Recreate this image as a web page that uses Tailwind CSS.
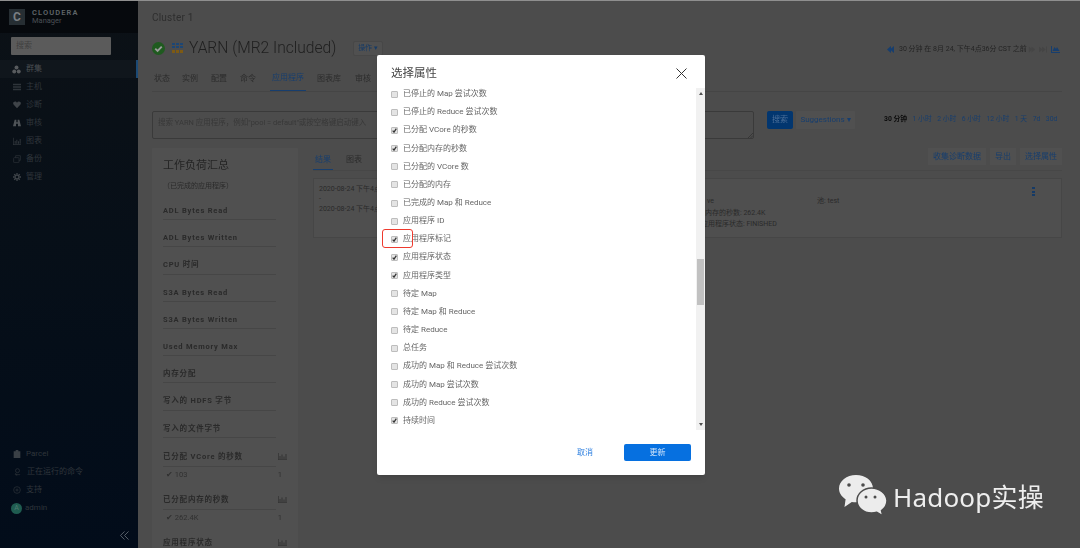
<!DOCTYPE html>
<html lang="en">
<head>
    <meta charset="UTF-8">
    <title>YARN - Cloudera Manager</title>
    <script src="https://cdn.jsdelivr.net/npm/@tailwindcss/browser@4"></script>
</head>
<body class="w-[1080px] h-[548px] overflow-hidden relative bg-[#4c4c4c] font-['Roboto','Noto_Sans_CJK_SC',sans-serif]">
    <div class="h-px bg-[#8f8f8f]"></div>
    <div class="flex h-[547px] blur-[0.4px]">
        <!-- sidebar -->
        <aside class="w-[138px] shrink-0 flex flex-col bg-gradient-to-b from-[#0c1116] to-[#020c1a] text-[8px] text-[#2f353b]">
            <div class="h-[32px] shrink-0 bg-[#06090d] flex items-center pl-[9px] gap-[7px]">
                <div class="w-[16px] h-[16px] bg-[#262e33] flex items-center justify-center text-[#7a7f83] text-[12px] font-bold leading-none">C</div>
                <div class="leading-[8.5px]">
                    <div class="text-[7.5px] font-semibold tracking-[1.1px] text-[#5f6468]">CLOUDERA</div>
                    <div class="text-[7.5px] text-[#4b5055]">Manager</div>
                </div>
            </div>
            <div class="pl-[11px] pr-[27px] pt-[4px] pb-[5px]">
                <div class="h-[18px] bg-[#5b5b5b] rounded-[1px] pl-[5px] flex items-center text-[#3f3f3f] text-[8px]">搜索</div>
            </div>
            <nav class="flex flex-col">
                <div class="h-[18px] flex items-center pl-[12px] gap-[5px] bg-[#10161c] border-r-2 border-[#1c4a75] text-[#4a4e52]">
                    <svg class="w-[9px] h-[9px]" viewBox="0 0 12 12" fill="#585b5e"><circle cx="6" cy="3.4" r="2.6"/><circle cx="3" cy="8.6" r="2.6"/><circle cx="9" cy="8.6" r="2.6"/></svg>群集
                </div>
                <div class="h-[18px] flex items-center pl-[13px] gap-[5px]">
                    <svg class="w-[8px] h-[8px]" viewBox="0 0 12 12" fill="#2f353b"><path d="M0 1h12v2.5H0zM0 4.8h12v2.5H0zM0 8.5h12V11H0z"/></svg>主机
                </div>
                <div class="h-[18px] flex items-center pl-[13px] gap-[5px]">
                    <svg class="w-[8px] h-[8px]" viewBox="0 0 12 12" fill="#3f4449"><path d="M6 11 .8 5.4C-.8 3 1 .8 3.200.8 4.500.8 5.400 1.500 6 2.500 6.600 1.500 7.500.8 8.800.8 11 .8 12.800 3 11.200 5.400z"/></svg>诊断
                </div>
                <div class="h-[18px] flex items-center pl-[13px] gap-[5px]">
                    <svg class="w-[8px] h-[8px]" viewBox="0 0 12 12" fill="#4f5458"><path d="M2.500 1h2.500v4h2V1h2.500L12 11H7.500V7h-3v4H0z"/></svg>审核
                </div>
                <div class="h-[18px] flex items-center pl-[13px] gap-[5px]">
                    <svg class="w-[8px] h-[8px]" viewBox="0 0 12 12" fill="#2f353b"><path d="M0 1h1v10h11v1H0zM2.500 6h1.500v4H2.500zM5 4h1.500v6H5zM7.500 6.500H9V10H7.500zM10 3h1.500v7H10z"/></svg>图表
                </div>
                <div class="h-[18px] flex items-center pl-[13px] gap-[5px]">
                    <svg class="w-[8px] h-[8px]" viewBox="0 0 12 12" fill="none" stroke="#2f353b"><rect x="1" y="4" width="8" height="7.500" rx="1"/><path d="M4 4V1h7v7H9"/></svg>备份
                </div>
                <div class="h-[18px] flex items-center pl-[13px] gap-[5px]">
                    <svg class="w-[8px] h-[8px]" viewBox="0 0 12 12" fill="none" stroke="#3f4449" stroke-width="2"><circle cx="6" cy="6" r="3"/><path d="M6 0v2M6 10v2M0 6h2M10 6h2M1.800 1.800l1.400 1.400M8.800 8.800l1.400 1.400M1.800 10.200l1.400-1.400M8.800 3.200l1.400-1.400"/></svg>管理
                </div>
            </nav>
            <div class="mt-auto flex flex-col">
                <div class="h-[18px] flex items-center pl-[13px] gap-[5px]">
                    <svg class="w-[8px] h-[8px]" viewBox="0 0 12 12" fill="#3a4046"><path d="M4 0h4v2h3v10H1V2h3z"/></svg>Parcel
                </div>
                <div class="h-[18px] flex items-center pl-[13px] gap-[5px]">
                    <svg class="w-[9px] h-[8px]" viewBox="0 0 12 12" fill="none" stroke="#2f353b"><circle cx="6" cy="4" r="3"/><path d="M2 10h8M3 7.500l2 4"/></svg>正在运行的命令
                </div>
                <div class="h-[18px] flex items-center pl-[13px] gap-[5px]">
                    <svg class="w-[8px] h-[8px]" viewBox="0 0 12 12" fill="none" stroke="#2f353b"><circle cx="6" cy="6" r="5"/><circle cx="6" cy="6" r="1.500"/></svg>支持
                </div>
                <div class="h-[18px] flex items-center pl-[11px] gap-[3px]">
                    <div class="w-[11px] h-[11px] rounded-full bg-[#1f5c50] text-[#4f7a70] text-[7px] flex items-center justify-center">A</div>admin
                </div>
                <div class="h-[31px] flex items-center justify-end pr-[9px] pt-[5px]">
                    <svg class="w-[9px] h-[9px]" viewBox="0 0 10 10" fill="none" stroke="#5f6870" stroke-width="1"><path d="M5 .5.500 5 5 9.500M9.500.5 5 5l4.500 4.500"/></svg>
                </div>
            </div>
        </aside>

        <!-- main -->
        <main class="flex-1 pl-[14px] pr-[18px] text-[#262626]">
            <div class="h-[32px] flex items-center text-[10px] text-[#2e2e2e] tracking-[0.2px]">Cluster 1</div>
            <div class="h-[31px] flex items-center">
                <svg class="w-[13px] h-[13px] mr-[7px]" viewBox="0 0 14 14"><circle cx="7" cy="7" r="7" fill="#1f5a1f"/><path d="M3.500 7.200l2.500 2.500 4.500-4.700" fill="none" stroke="#9a9a9a" stroke-width="2"/></svg>
                <svg class="w-[11px] h-[11px] mr-[6px]" viewBox="0 0 11 11"><path fill="#1d4674" d="M0 0h3v2H0zM4 0h3v2H4zM8 0h3v2H8zM0 3h3v2H0zM4 3h3v2H4zM8 3h3v2H8z"/><path fill="#7d5a14" d="M0 7h3v3H0zM4 7h3v3H4zM8 7h3v3H8z"/></svg>
                <span class="w-[149px] whitespace-nowrap text-[15.600px] font-light text-[#1f1f1f]">YARN (MR2 Included)</span>
                <div class="ml-[15px] h-[15px] w-[30px] bg-[#505050] border border-[#474747] rounded-[2px] flex items-center justify-center text-[7px] text-[#153a66]">操作 ▾</div>
            </div>
            <div class="h-[27px] mt-px flex items-end border-b border-[#454545] text-[8px] text-[#2c2c2c]">
                <span class="w-[30px] pl-[2px] pb-[6px]">状态</span>
                <span class="w-[29px] pb-[6px]">实例</span>
                <span class="w-[29px] pb-[6px]">配置</span>
                <span class="w-[30px] pb-[6px]">命令</span>
                <span class="w-[36px] mr-[11px] text-center pb-[6px] text-[#173e6e] border-b border-[#173e6e]">应用程序</span>
                <span class="w-[38px] pb-[6px]">图表库</span>
                <span class="pb-[6px]">审核</span>
            </div>
            <div class="flex items-start mt-[19px] h-[37px]">
                <div class="relative w-[602px] shrink-0 h-[28px] border border-[#3a3a3a] rounded-[2px] pl-[5px] pt-[5px] text-[7.500px] text-[#383838]">
                    搜索 YARN 应用程序，例如"pool = default"或按空格键启动键入
                    <svg class="absolute right-0 bottom-0 w-[5px] h-[5px]" viewBox="0 0 5 5" fill="none" stroke="#2e2e2e" stroke-width="0.7"><path d="M0 5 5 0M2.500 5 5 2.500"/></svg>
                </div>
                <div class="ml-[13px] w-[26px] shrink-0 h-[18px] bg-[#02366f] rounded-[2px] flex items-center justify-center text-[8px] text-[#4c6f99]">搜索</div>
                <div class="ml-[3px] w-[59px] shrink-0 h-[18px] bg-[#505050] rounded-[1px] flex items-center justify-center text-[8px] whitespace-nowrap text-[#173e6e]">Suggestions ▾</div>
                <div class="ml-[29px] shrink-0 flex gap-[5.500px] pt-[3px] whitespace-nowrap text-[6.800px] text-[#173e6e]">
                    <span class="font-bold text-[#0c0c0c]">30 分钟</span><span>1 小时</span><span>2 小时</span><span>6 小时</span><span>12 小时</span><span>1 天</span><span>7d</span><span>30d</span>
                </div>
            </div>
            <div class="flex">
                <!-- workload summary -->
                <section class="w-[146px] shrink-0 h-[402px] bg-[#505050] rounded-[1px] pl-[11px] pr-[11px] pt-[10px] overflow-hidden">
                    <h2 class="text-[11px] leading-[16px] text-[#242424]">工作负荷汇总</h2>
                    <p class="text-[7px] mt-[7px] h-[12px] text-[#2a2a2a]">（已完成的应用程序）</p>
                    <div class="flex flex-col text-[7.500px] font-bold tracking-[0.8px] text-[#2a2a2a] w-[113px]">
                        <div class="h-[27.200px] pt-[12px] border-b border-[#464646]">ADL Bytes Read</div>
                        <div class="h-[27.200px] pt-[12px] border-b border-[#464646]">ADL Bytes Written</div>
                        <div class="h-[27.200px] pt-[12px] border-b border-[#464646]">CPU 时间</div>
                        <div class="h-[27.200px] pt-[12px] border-b border-[#464646]">S3A Bytes Read</div>
                        <div class="h-[27.200px] pt-[12px] border-b border-[#464646]">S3A Bytes Written</div>
                        <div class="h-[27.200px] pt-[12px] border-b border-[#464646]">Used Memory Max</div>
                        <div class="h-[27.200px] pt-[12px] border-b border-[#464646]">内存分配</div>
                        <div class="h-[27.200px] pt-[12px] border-b border-[#464646]">写入的 HDFS 字节</div>
                        <div class="h-[27.200px] pt-[12px] border-b border-[#464646]">写入的文件字节</div>
                        <div class="h-[29px] pt-[13px] border-b border-[#464646] relative">已分配 VCore 的秒数
                            <svg class="absolute left-[115px] top-[15px] w-[9px] h-[7px]" viewBox="0 0 9 7" fill="#333"><path d="M0 0h.7v6.300H9V7H0zM1.500 3h1v3h-1zM3.500 1.500h1V6h-1zM5.500 3.500h1V6h-1zM7.500 1h1v5h-1z"/></svg>
                        </div>
                        <div class="h-[17px] pt-[2px] pl-[3px] font-normal tracking-normal flex justify-between w-[119px] text-[#303030]"><span>✔ 103</span><span>1</span></div>
                        <div class="h-[26px] pt-[10px] border-b border-[#464646] relative">已分配内存的秒数
                            <svg class="absolute left-[115px] top-[12px] w-[9px] h-[7px]" viewBox="0 0 9 7" fill="#333"><path d="M0 0h.7v6.300H9V7H0zM1.500 3h1v3h-1zM3.500 1.500h1V6h-1zM5.500 3.500h1V6h-1zM7.500 1h1v5h-1z"/></svg>
                        </div>
                        <div class="h-[17px] pt-[2px] pl-[3px] font-normal tracking-normal flex justify-between w-[119px] text-[#303030]"><span>✔ 262.4K</span><span>1</span></div>
                        <div class="h-[26px] pt-[10px] relative">应用程序状态
                            <svg class="absolute left-[115px] top-[12px] w-[9px] h-[7px]" viewBox="0 0 9 7" fill="#333"><path d="M0 0h.7v6.300H9V7H0zM1.500 3h1v3h-1zM3.500 1.500h1V6h-1zM5.500 3.500h1V6h-1zM7.500 1h1v5h-1z"/></svg>
                        </div>
                    </div>
                </section>
                <!-- results -->
                <section class="flex-1 ml-[15px]">
                    <div class="h-[23px] flex items-start border-b border-[#474747]">
                        <span class="w-[20px] h-[22px] pt-[6px] text-[8px] text-center text-[#173e6e] border-b border-[#173e6e]">结果</span>
                        <span class="ml-[13px] pt-[6px] text-[8px] text-[#2c2c2c]">图表</span>
                        <div class="ml-auto flex gap-[4px] text-[8px] text-[#173e6e]">
                            <span class="h-[17px] px-[5px] bg-[#505050] flex items-center">收集诊断数据</span>
                            <span class="h-[17px] px-[5px] bg-[#505050] flex items-center">导出</span>
                            <span class="h-[17px] px-[5px] bg-[#505050] flex items-center">选择属性</span>
                        </div>
                    </div>
                    <div class="relative h-[60px] mt-[7px] border border-[#464646] bg-[#4f4f4f] pl-[5px] pt-[5px] text-[7px] leading-[10px] text-[#2a2a2a]">
                        <div>2020-08-24 下午4点</div>
                        <div>-</div>
                        <div>2020-08-24 下午4点</div>
                        <div class="absolute left-[393px] top-[16px] leading-[12px]">ve</div>
                        <div class="absolute left-[503px] top-[16px] leading-[12px]">池: test</div>
                        <div class="absolute left-[370px] top-[28px] leading-[12px]">已分配内存的秒数: 262.4K</div>
                        <div class="absolute left-[387px] top-[39px] leading-[12px]">应用程序状态: FINISHED</div>
                        <div class="absolute left-[718px] top-[8px] w-[2px] h-[9px] flex flex-col justify-between">
                            <div class="w-[3px] h-[2px] bg-[#153a66]"></div><div class="w-[3px] h-[2px] bg-[#153a66]"></div><div class="w-[3px] h-[2px] bg-[#153a66]"></div>
                        </div>
                    </div>
                </section>
            </div>
        </main>
    </div>

    <!-- history bar, sits above the tabs on the right -->
    <div class="absolute left-[887px] top-[44px] flex items-center gap-[4px] whitespace-nowrap text-[7px] text-[#242424] blur-[0.4px]">
        <svg class="w-[8px] h-[7px]" viewBox="0 0 8 7" fill="#173e6e"><path d="M4 0v7L0 3.500zM7 0v7L3 3.500z"/></svg>
        <span class="w-[125px]">30 分钟 在 8月 24, 下午4点36分 CST 之前</span>
        <svg class="w-[7px] h-[7px]" viewBox="0 0 8 7" fill="#454545"><path d="M1 0v7l4-3.500zM4 0v7l4-3.500z"/></svg>
        <svg class="w-[8px] h-[7px]" viewBox="0 0 9 7" fill="#454545"><path d="M0 0v7l4-3.500zM3.500 0v7l4-3.500zM8 0h1v7H8z"/></svg>
        <svg class="w-[9px] h-[7px]" viewBox="0 0 9 7" fill="#173e6e"><path d="M0 0h1v6h8v1H0zM1.500 5l2-4 1.500 2 1-2 2.500 4z"/></svg>
    </div>

    <!-- modal -->
    <div class="absolute left-[377px] top-[55px] w-[328px] h-[420px] bg-white rounded-[2px] flex flex-col text-[#666] shadow-md blur-[0.4px]">
        <div class="h-[33px] shrink-0 flex items-center justify-between pl-[14px] pr-[18px] pt-[4px]">
            <span class="text-[11.500px] text-[#444]">选择属性</span>
            <svg class="w-[11px] h-[11px]" viewBox="0 0 11 11" fill="none" stroke="#333" stroke-width="1"><path d="M.5.500l10 10M10.500.500l-10 10"/></svg>
        </div>
        <div class="h-[342px] shrink-0 flex">
            <div class="flex-1 pl-[14px] overflow-hidden text-[8px]">
                <div id="attrs" class="-mt-[3px]"></div>
            </div>
            <div class="w-[9px] bg-[#f1f1f1] relative shrink-0">
                <div class="absolute left-[2.500px] top-[4px] w-0 h-0 border-x-[2px] border-x-transparent border-b-[3px] border-b-[#505050]"></div>
                <div class="absolute left-[1px] top-[171px] w-[7px] h-[46px] bg-[#c1c1c1]"></div>
                <div class="absolute left-[2.500px] bottom-[4px] w-0 h-0 border-x-[2px] border-x-transparent border-t-[3px] border-t-[#505050]"></div>
            </div>
        </div>
        <div class="flex-1 flex items-center justify-end pr-[14px]">
            <span class="text-[8px] text-[#2f80e0] mr-[31px]">取消</span>
            <button class="w-[67px] h-[17px] bg-[#0670e0] rounded-[2px] text-[8px] text-[#cfe3fa]">更新</button>
        </div>
    </div>

    <!-- red annotation -->
    <div class="absolute left-[382px] top-[229px] w-[31px] h-[19px] border border-[#ee3a2e] rounded-[3px]"></div>

    <!-- watermark -->
    <div class="absolute left-[839px] top-[475px] flex items-start">
        <svg class="w-[48px] h-[41px]" viewBox="0 0 48 41">
            <path fill="#ececec" d="M17 0C7.600 0 0 6 0 13.500c0 4.400 2.600 8.200 6.600 10.700L5.500 32l7.300-5c1.300.2 2.800.3 4.200.3 9.400 0 17-6.100 17-13.800S26.400 0 17 0z"/>
            <path fill="#ececec" stroke="#4c4c4c" stroke-width="1.500" d="M32.500 13C24.300 13 18 18.700 18 25.500S24.300 38 32.500 38c1.900 0 3.700-.3 5.300-.8l6 3.800-1.300-5.500c3.300-2.300 5.500-5.900 5.500-10C47.500 18.700 40.700 13 32.500 13z"/>
            <circle cx="10" cy="10" r="1.800" fill="#4c4c4c"/><circle cx="24" cy="10" r="1.800" fill="#4c4c4c"/>
            <circle cx="27" cy="22" r="1.500" fill="#4c4c4c"/><circle cx="36" cy="22" r="1.500" fill="#4c4c4c"/>
        </svg>
        <span class="ml-[6px] mt-[9px] text-[26px] leading-[26px] tracking-[0.2px] text-[#eeeeee] font-['Noto_Sans','Noto_Sans_CJK_SC',sans-serif]">Hadoop实操</span>
    </div>

    <script>
        const attrs = [
            ['已停止的 Map 尝试次数', false], ['已停止的 Reduce 尝试次数', false],
            ['已分配 VCore 的秒数', true], ['已分配内存的秒数', true],
            ['已分配的 VCore 数', false], ['已分配的内存', false],
            ['已完成的 Map 和 Reduce', false], ['应用程序 ID', false],
            ['应用程序标记', true], ['应用程序状态', true], ['应用程序类型', true],
            ['待定 Map', false], ['待定 Map 和 Reduce', false], ['待定 Reduce', false],
            ['总任务', false], ['成功的 Map 和 Reduce 尝试次数', false],
            ['成功的 Map 尝试次数', false], ['成功的 Reduce 尝试次数', false],
            ['持续时间', true]
        ];
        const list = document.getElementById('attrs');
        attrs.forEach(([name, on]) => {
            const row = document.createElement('div');
            row.className = 'h-[18.170px] flex items-center gap-[5px]';
            const box = document.createElement('div');
            box.className = 'w-[7px] h-[7px] bg-[#e4e4e4] border border-[#bdbdbd] rounded-[1px] flex items-center justify-center';
            if (on) box.innerHTML = '<svg class="w-[5px] h-[5px]" viewBox="0 0 6 6" fill="none" stroke="#333" stroke-width="1.500"><path d="M.8 3.200l1.600 1.800L5.200.8"/></svg>';
            const label = document.createElement('span');
            label.textContent = name;
            row.append(box, label);
            list.appendChild(row);
        });
    </script>
</body>
</html>
